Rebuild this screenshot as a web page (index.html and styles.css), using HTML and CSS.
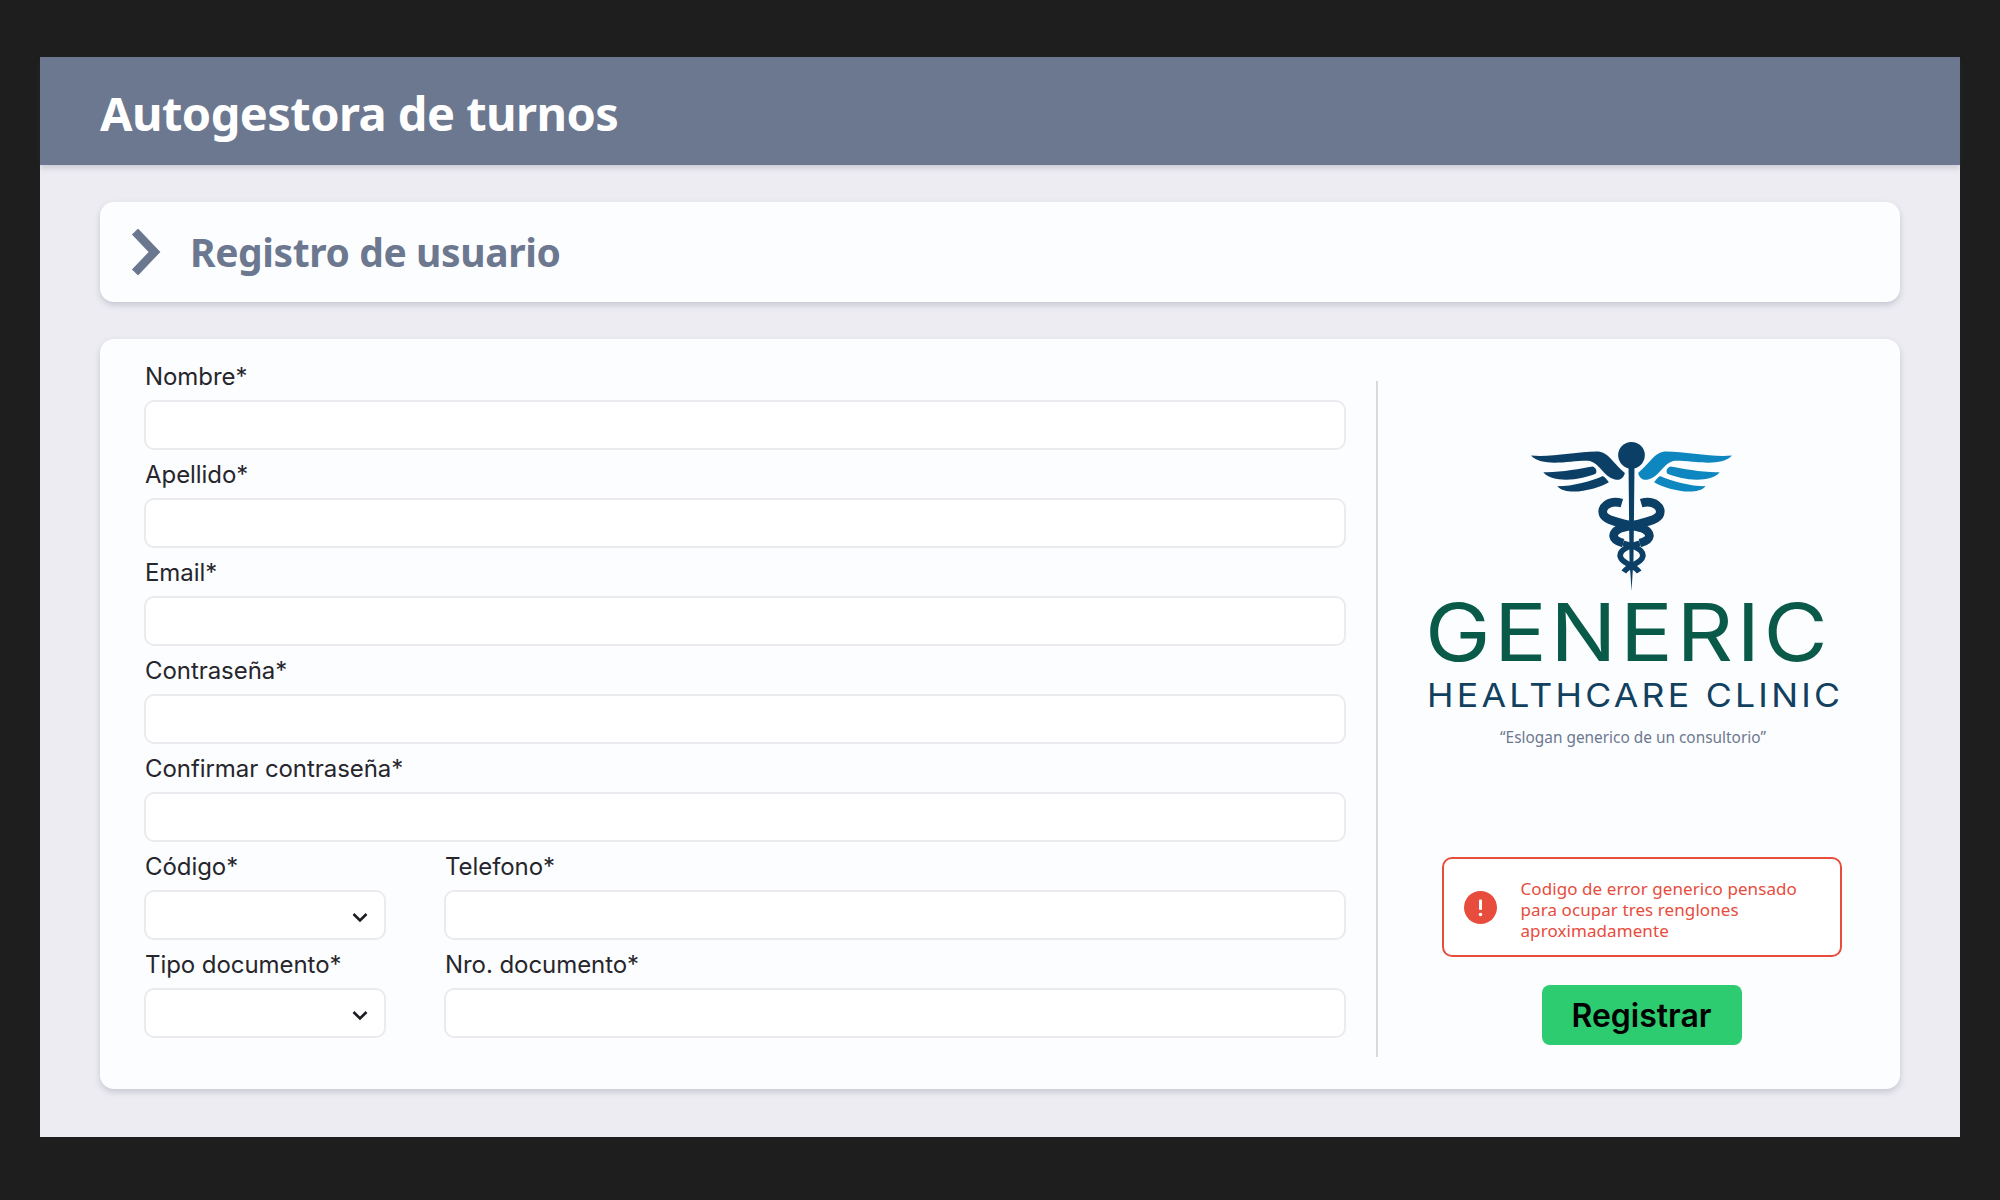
FILE: index.html
```html
<!DOCTYPE html>
<html lang="es">
<head>
<meta charset="utf-8">
<title>Autogestora de turnos</title>
<link rel="stylesheet" href="styles.css">
</head>
<body>
<div class="frame">
  <header class="topbar"><h1 class="app-title">Autogestora de turnos</h1></header>
  <main class="content">
    <section class="card section-head">
      <svg class="head-chevron" width="30" height="46" viewBox="0 0 30 46"><path d="M4 2.5 L23.5 23 L4 43.5" fill="none" stroke="#6b778f" stroke-width="8.5"/></svg>
      <h2 class="section-title">Registro de usuario</h2>
    </section>
    <section class="card form-card">
      <form class="form-col">
        <label class="field"><span class="label">Nombre*</span><input class="control" type="text"></label>
        <label class="field"><span class="label">Apellido*</span><input class="control" type="text"></label>
        <label class="field"><span class="label">Email*</span><input class="control" type="email"></label>
        <label class="field"><span class="label">Contraseña*</span><input class="control" type="password"></label>
        <label class="field"><span class="label">Confirmar contraseña*</span><input class="control" type="password"></label>
        <div class="pair">
          <label class="field"><span class="label">Código*</span>
            <span class="select-wrap"><select class="control"></select>
            <svg class="select-chevron" width="16" height="11" viewBox="0 0 16 11"><path d="M1.5 2 L8 8.5 L14.500 2" fill="none" stroke="#1c1c22" stroke-width="2.600"/></svg></span></label>
          <label class="field"><span class="label">Telefono*</span><input class="control" type="tel"></label>
        </div>
        <div class="pair">
          <label class="field"><span class="label">Tipo documento*</span>
            <span class="select-wrap"><select class="control"></select>
            <svg class="select-chevron" width="16" height="11" viewBox="0 0 16 11"><path d="M1.5 2 L8 8.5 L14.500 2" fill="none" stroke="#1c1c22" stroke-width="2.600"/></svg></span></label>
          <label class="field"><span class="label">Nro. documento*</span><input class="control" type="text"></label>
        </div>
      </form>
      <aside class="side-pane">
        <div class="logo">
          <svg class="logo-mark" width="203" height="152" viewBox="90 60 610 455">
            <g fill="#0b3f66">
              <path d="M93 106 C150 112 230 95 290 94 C325 94 335 125 375 158 C372 172 360 182 345 178 C310 168 300 130 270 122 C220 118 130 145 93 106 Z"/>
              <path d="M130 156 C180 158 240 145 278 139 C288 142 292 152 288 160 C250 178 160 192 130 156 Z"/>
              <path d="M172 198 C220 198 275 182 309 167 C316 172 322 178 327 186 C290 208 200 230 172 198 Z"/>
            </g>
            <g fill="#0e86bf" transform="translate(790 0) scale(-1 1)">
              <path d="M93 106 C150 112 230 95 290 94 C325 94 335 125 375 158 C372 172 360 182 345 178 C310 168 300 130 270 122 C220 118 130 145 93 106 Z"/>
              <path d="M130 156 C180 158 240 145 278 139 C288 142 292 152 288 160 C250 178 160 192 130 156 Z"/>
              <path d="M172 198 C220 198 275 182 309 167 C316 172 322 178 327 186 C290 208 200 230 172 198 Z"/>
            </g>
            <circle cx="395" cy="105" r="40" fill="#0b3f66"/>
            <path d="M386 135 L404 135 L401 420 L395 512 L389 420 Z" fill="#0b3f66"/>
            <g fill="none" stroke="#0b3f66" stroke-width="26">
              <path d="M366 249 C328 238 298 262 312 286 C326 306 385 312 427 324 C458 338 456 360 420 369"/>
              <path d="M424 249 C462 238 492 262 478 286 C464 306 405 312 363 324 C332 338 334 360 370 369"/>
            </g>
            <g fill="none" stroke="#0b3f66" stroke-width="17">
              <path d="M420 369 C385 378 352 392 363 414 C372 432 405 436 418 456"/>
              <path d="M370 369 C405 378 438 392 427 414 C418 432 385 436 372 456"/>
            </g>
          </svg>
          <div class="logo-name">GENERIC</div>
          <div class="logo-sub">HEALTHCARE CLINIC</div>
          <div class="logo-slogan">“Eslogan generico de un consultorio”</div>
        </div>
        <div class="alert">
          <svg class="alert-icon" width="33" height="33" viewBox="0 0 33 33"><circle cx="16.500" cy="16.500" r="16.500" fill="#e74c3c"/><rect x="15" y="8.500" width="3" height="10.500" rx="1" fill="#fff"/><circle cx="16.500" cy="23.500" r="1.800" fill="#fff"/></svg>
          <p class="alert-text">Codigo de error generico pensado para ocupar tres renglones aproximadamente</p>
        </div>
        <button class="submit" type="button">Registrar</button>
      </aside>
    </section>
  </main>
</div>
</body>
</html>
```

FILE: styles.css
```css
* { box-sizing: border-box; }
html, body { margin: 0; height: 100%; }
body {
  background: #1e1e1e;
  padding: 57px 40px 63px;
  font-family: "Inter", sans-serif;
}
.frame {
  height: 1080px;
  background: #edecf2;
  display: flex;
  flex-direction: column;
}
.topbar {
  height: 108px;
  flex: none;
  background: #6c788f;
  padding: 4px 60px 0;
  display: flex;
  align-items: center;
  box-shadow: 0 3px 6px rgba(60, 70, 100, 0.2);
}
.app-title {
  margin: 0;
  font: 700 47px/1 "Noto Sans", sans-serif;
  letter-spacing: -0.55px;
  color: #fff;
}
.content {
  padding: 37px 60px 48px;
  display: flex;
  flex-direction: column;
  gap: 37px;
}
.card {
  background: #fcfdff;
  border-radius: 14px;
  box-shadow: 0 3px 6px rgba(60, 70, 100, 0.22);
}
.section-head {
  height: 100px;
  padding: 0 0 2px 31px;
  display: flex;
  align-items: center;
  gap: 29px;
}
.head-chevron { margin-top: 2px; }
.section-title {
  margin: 0;
  font: 700 39px/1 "Noto Sans", sans-serif;
  letter-spacing: -0.4px;
  color: #6c788f;
}
.form-card {
  height: 750px;
  padding: 23px 0 32px 44px;
  display: flex;
}
.form-col {
  width: 1202px;
  flex: none;
  padding-bottom: 20px;
}
.field { display: block; }
.label {
  display: block;
  height: 38px;
  padding-left: 1px;
  font-size: 24px;
  line-height: 29px;
  letter-spacing: -0.06px;
  color: #26262c;
}
.pair {
  display: grid;
  grid-template-columns: 242px 902px;
  column-gap: 58px;
}
.control {
  display: block;
  width: 100%;
  height: 50px;
  margin: 0 0 10px;
  padding: 0 12px;
  background: #fff;
  border: 2px solid #ebebef;
  border-radius: 10px;
  appearance: none;
  font: inherit;
  outline: none;
}
.select-wrap { display: block; position: relative; }
.select-chevron { position: absolute; right: 18px; top: 22px; }
.side-pane {
  flex: 1;
  margin: 19px 0 0 30px;
  border-left: 2px solid #d9d9de;
  padding: 0 0 12px 5px;
  display: flex;
  flex-direction: column;
  align-items: center;
}
.logo {
  margin: 59px 18px 0 0;
  width: 408px;
  display: flex;
  flex-direction: column;
  align-items: center;
}
.logo-mark { display: block; margin-left: -3px; }
.logo-name {
  align-self: flex-start;
  margin: 0 0 0 -4px;
  font: 400 80px/80px "Inter", sans-serif;
  letter-spacing: 3.100px;
  transform: scaleX(1.1);
  transform-origin: left center;
  color: #0a5a49;
}
.logo-sub {
  align-self: flex-start;
  margin: 3px 0 0 -2px;
  font: 400 33px/40px "Inter", sans-serif;
  letter-spacing: 3px;
  transform: scaleX(1.08);
  transform-origin: left center;
  white-space: nowrap;
  color: #12405f;
}
.logo-slogan {
  margin: 12px 0 0 1px;
  font: 400 15.400px/22px "Noto Sans", sans-serif;
  color: #6c788f;
}
.alert {
  margin-top: auto;
  width: 400px;
  height: 100px;
  padding: 0 20px;
  background: #fff;
  border: 2px solid #e74c3c;
  border-radius: 10px;
  display: flex;
  align-items: center;
  gap: 24px;
}
.alert-icon { flex: none; }
.alert-text {
  margin: 0;
  padding-top: 5px;
  font: 400 17px/21px "Noto Sans", sans-serif;
  letter-spacing: 0.08px;
  color: #e74c3c;
}
.submit {
  margin-top: 28px;
  width: 200px;
  height: 60px;
  flex: none;
  padding-top: 2px;
  background: #2ecc71;
  border: 0;
  border-radius: 8px;
  font: 600 32px/1 "Inter", sans-serif;
  color: #000;
}
```
